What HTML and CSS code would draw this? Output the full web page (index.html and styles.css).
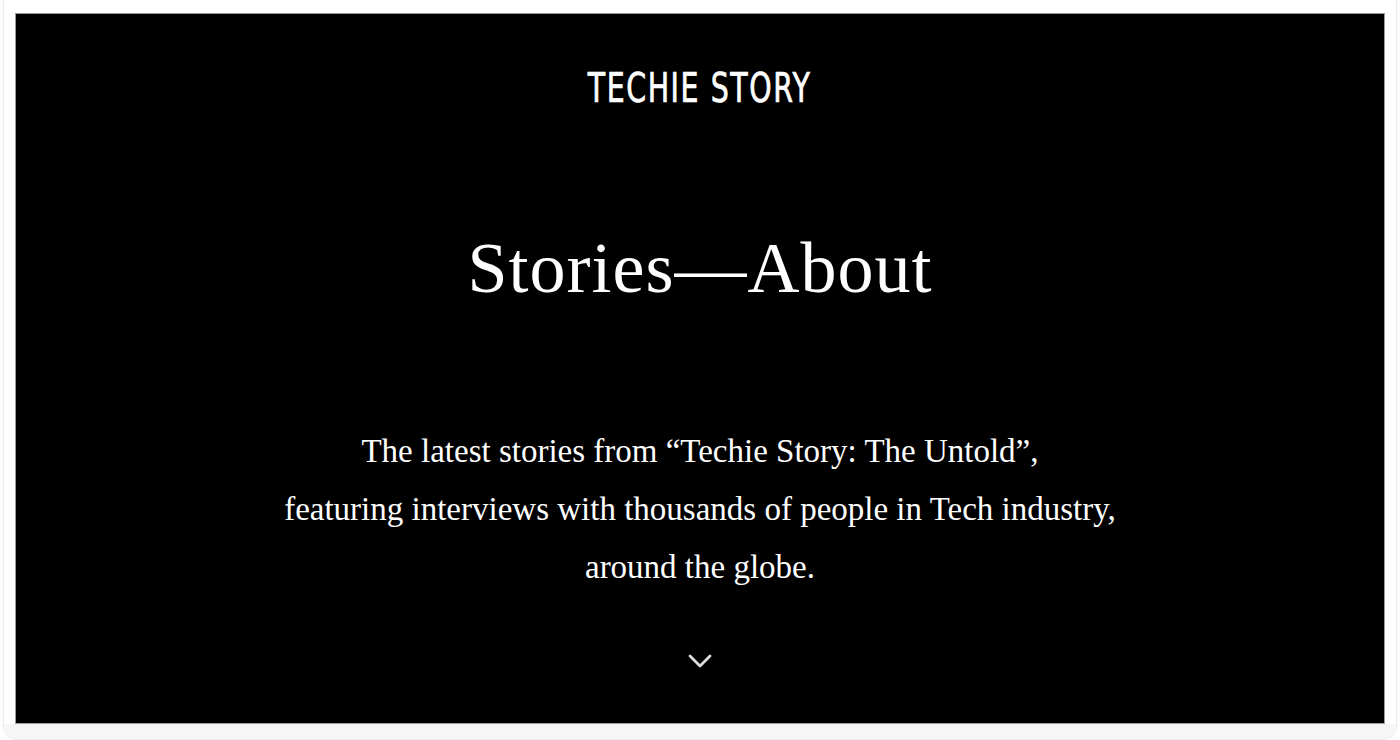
FILE: index.html
```html
<!DOCTYPE html>
<html lang="en">
<head>
<meta charset="utf-8">
<title>Techie Story — Stories About</title>
<link rel="stylesheet" href="styles.css">
</head>
<body>
<div class="frame">
  <div class="panel">
    <header class="brand">TECHIE STORY</header>
    <h1 class="heading">Stories—About</h1>
    <p class="intro">The latest stories from “Techie Story: The Untold”,<br>featuring interviews with thousands of people in Tech industry,<br>around the globe.</p>
    <div class="chevron">
      <svg width="24" height="14" viewBox="0 0 24 14" aria-hidden="true"><path d="M2 2 L12 12 L22 2" fill="none" stroke="#dcdcdc" stroke-width="2.8" stroke-linecap="round" stroke-linejoin="round"/></svg>
    </div>
  </div>
  <div class="bottom-band"></div>
</div>
</body>
</html>
```
FILE: styles.css
```css
html, body {
  margin: 0;
  padding: 0;
  background: #ffffff;
}
.frame {
  margin: 0 3px;
  height: 740px;
  box-sizing: border-box;
  border-left: 1px solid #ececec;
  border-right: 1px solid #ececec;
  border-bottom: 1px solid #ececec;
  border-radius: 0 0 14px 14px;
  padding-top: 13px;
  display: flex;
  flex-direction: column;
  overflow: hidden;
}
.panel {
  margin: 0 11px;
  height: 711px;
  box-sizing: border-box;
  background: #000;
  border: 1px solid #9a9a9a;
  display: flex;
  flex-direction: column;
  align-items: center;
  color: #fff;
}
.brand {
  margin-top: 52px;
  font-family: "Liberation Sans Narrow", "DejaVu Sans Condensed", "Liberation Sans", sans-serif;
  font-size: 40px;
  line-height: 44px;
  letter-spacing: 2px;
  font-weight: 400;
  -webkit-text-stroke: 0.7px #fff;
  transform: scaleX(0.79);
}
.heading {
  margin: 118px 0 0;
  font-family: "Liberation Serif", "DejaVu Serif", serif;
  font-weight: 400;
  font-size: 72px;
  line-height: 80px;
  letter-spacing: 1px;
}
.intro {
  margin: 114px 0 0;
  font-family: "Liberation Serif", "DejaVu Serif", serif;
  font-size: 33px;
  line-height: 58px;
  text-align: center;
}
.chevron {
  margin-top: 58px;
  display: flex;
}
.bottom-band {
  flex: 1;
  background: #f6f6f6;
}
```
